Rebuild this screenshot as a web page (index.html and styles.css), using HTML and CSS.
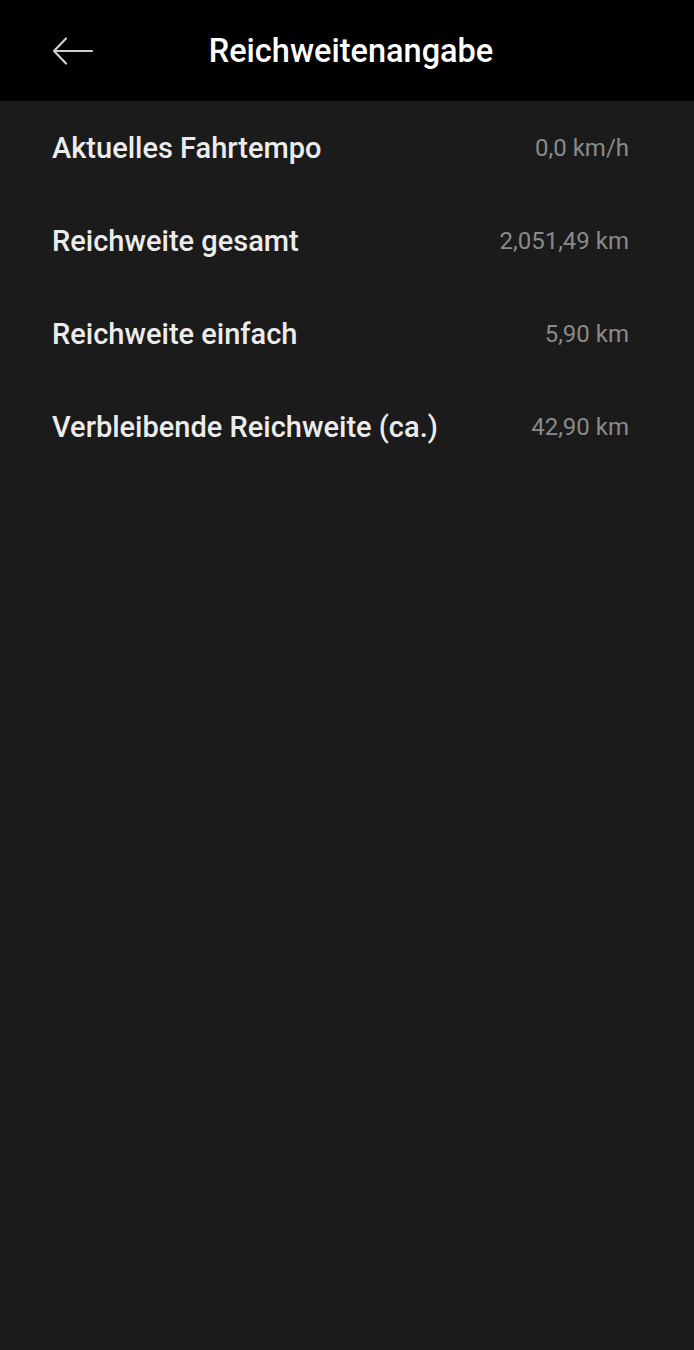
FILE: index.html
```html
<!DOCTYPE html>
<html lang="de">
<head>
<meta charset="utf-8">
<link rel="stylesheet" href="styles.css">
</head>
<body>
<header class="topbar">
  <button class="back" aria-label="Zurück">
    <svg width="42" height="30" viewBox="0 0 42 30"><path d="M2 15H40M14 2.5L2 15L14 27.5" fill="none" stroke="#cfcfcf" stroke-width="2.2" stroke-linecap="round" stroke-linejoin="round"/></svg>
  </button>
  <h1 class="title">Reichweitenangabe</h1>
</header>
<main class="list">
  <div class="row"><span class="label">Aktuelles Fahrtempo</span><span class="value">0,0 km/h</span></div>
  <div class="row"><span class="label">Reichweite gesamt</span><span class="value">2,051,49 km</span></div>
  <div class="row"><span class="label">Reichweite einfach</span><span class="value">5,90 km</span></div>
  <div class="row"><span class="label">Verbleibende Reichweite (ca.)</span><span class="value">42,90 km</span></div>
</main>
</body>
</html>
```
FILE: styles.css
```css
html, body {
  margin: 0;
  padding: 0;
  height: 100%;
}
body {
  background: #1b1b1b;
  font-family: Roboto, "Noto Sans", sans-serif;
  color: #ececec;
}
.topbar {
  background: #000;
  height: 101px;
  display: flex;
  align-items: center;
  position: relative;
}
.back {
  background: none;
  border: 0;
  padding: 0;
  margin-left: 52px;
  display: flex;
  cursor: pointer;
}
.title {
  position: absolute;
  left: 0;
  right: 0;
  text-align: center;
  margin: 0;
  font-size: 32.5px;
  font-weight: 500;
  color: #fff;
  pointer-events: none;
  padding-left: 8px;
}
.list {
  display: flex;
  flex-direction: column;
  padding: 0 65px 0 52px;
}
.row {
  display: flex;
  justify-content: space-between;
  align-items: center;
  height: 93px;
}
.label {
  font-size: 29px;
  font-weight: 500;
  color: #ececec;
}
.value {
  font-size: 24px;
  color: #8a8a8a;
}
```
